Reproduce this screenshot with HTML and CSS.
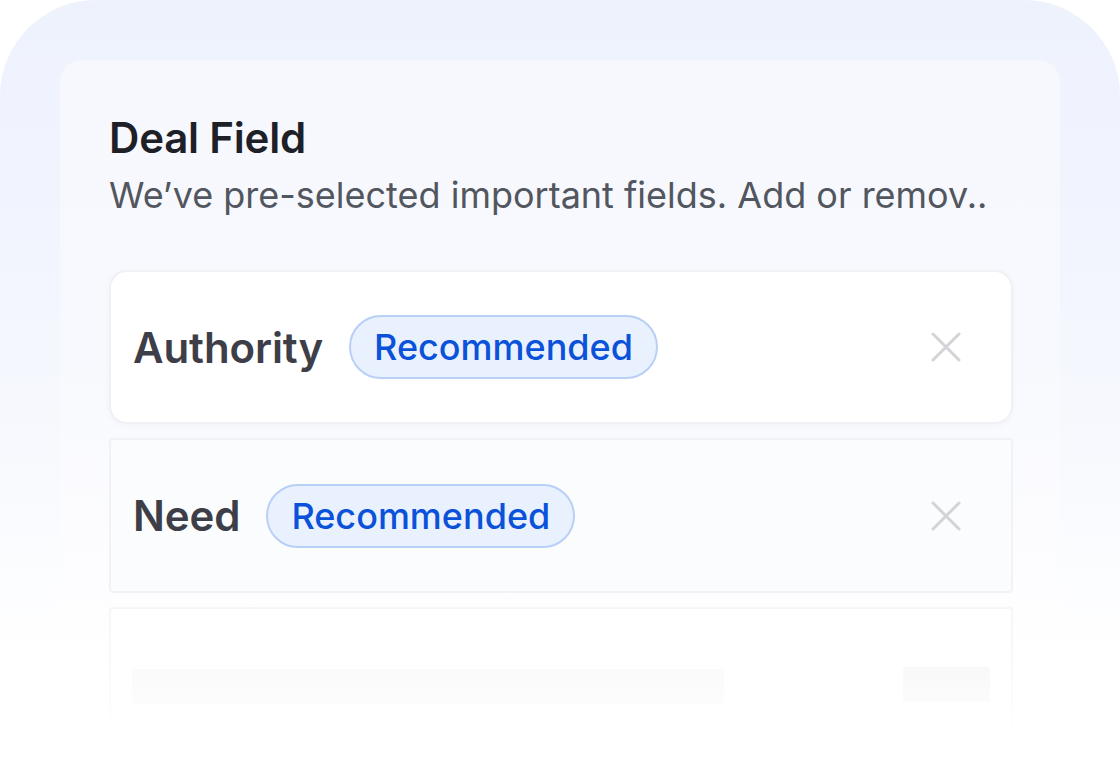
FILE: index.html
```html
<!DOCTYPE html>
<html lang="en">
<head>
<meta charset="utf-8">
<title>Deal Field</title>
<link rel="stylesheet" href="styles.css">
</head>
<body>
<div class="frame">
  <div class="panel">
    <h1 class="title">Deal Field</h1>
    <p class="subtitle">We’ve pre-selected important fields. Add or remov..</p>
    <div class="list">
      <div class="row row-active">
        <span class="label">Authority</span>
        <span class="badge">Recommended</span>
        <span class="close">
          <svg width="30" height="30" viewBox="0 0 30 30"><path d="M2 2 L28 28 M28 2 L2 28" stroke="#d3d4d7" stroke-width="3" stroke-linecap="round" fill="none"/></svg>
        </span>
      </div>
      <div class="row">
        <span class="label">Need</span>
        <span class="badge">Recommended</span>
        <span class="close">
          <svg width="30" height="30" viewBox="0 0 30 30"><path d="M2 2 L28 28 M28 2 L2 28" stroke="#d3d4d7" stroke-width="3" stroke-linecap="round" fill="none"/></svg>
        </span>
      </div>
      <div class="row row-ghost">
        <span class="skel-bar"></span>
        <span class="skel-btn"></span>
      </div>
    </div>
  </div>
</div>
</body>
</html>
```
FILE: styles.css
```css
* { box-sizing: border-box; }
html, body { margin: 0; padding: 0; background: #ffffff; }
body { width: 1120px; height: 772px; overflow: hidden; font-family: Inter, "Noto Sans", sans-serif; }

.frame {
  position: relative;
  width: 1120px;
  height: 772px;
  padding: 60px 60px 0 60px;
  border-radius: 96px 96px 0 0;
  background: linear-gradient(180deg, #eef2fd 0px, #f2f5fe 250px, #f7f9fe 450px, #ffffff 660px);
  overflow: hidden;
}
.frame::after {
  content: "";
  position: absolute;
  left: 0; right: 0; bottom: 0;
  height: 190px;
  background: linear-gradient(180deg, rgba(255,255,255,0) 0%, rgba(255,255,255,0.5) 45%, #ffffff 82%);
  pointer-events: none;
}

.panel {
  height: 100%;
  border-radius: 22px 22px 0 0;
  background: linear-gradient(180deg, #f6f8fe 0px, #f8f9fe 300px, #fdfdff 520px, #ffffff 600px);
  padding: 54px 47px 0 49px;
}

.title {
  margin: 0;
  font-size: 42px;
  line-height: 48px;
  font-weight: 600;
  color: #1d2027;
  letter-spacing: -0.2px;
}
.subtitle {
  margin: 13px 0 0 0;
  font-size: 36px;
  line-height: 40px;
  font-weight: 400;
  color: #52565f;
}

.list {
  margin-top: 55px;
  display: flex;
  flex-direction: column;
  gap: 14px;
}
.row {
  height: 155px;
  flex: none;
  display: flex;
  align-items: center;
  padding: 0 50px 0 22px;
  border: 2px solid #f1f2f5;
  border-radius: 4px;
  background: #fbfcfe;
}
.row-active {
  height: 154px;
  background: #ffffff;
  border-radius: 18px;
  border-color: #f0f1f4;
  box-shadow: 0 2px 6px rgba(30, 40, 80, 0.03);
}
.label {
  font-size: 42px;
  font-weight: 600;
  color: #3d3e47;
  letter-spacing: -0.1px;
}
.badge {
  margin-left: 26px;
  height: 64px;
  display: inline-flex;
  align-items: center;
  padding: 0 23px;
  border: 2px solid #b8cff6;
  border-radius: 32px;
  background: #eaf1fe;
  color: #0a52d9;
  font-size: 36px;
  font-weight: 500;
}
.close {
  margin-left: auto;
  width: 30px;
  height: 30px;
  display: flex;
}
.row-ghost {
  height: 140px;
  background: #ffffff;
  border-color: #f4f4f6;
  padding: 60px 21px 0 21px;
  align-items: flex-start;
}
.skel-bar {
  width: 592px;
  height: 35px;
  background: #f6f6f7;
}
.skel-btn {
  margin-left: auto;
  margin-top: -2px;
  width: 87px;
  height: 35px;
  background: #f2f2f3;
  border-radius: 2px;
}
```
